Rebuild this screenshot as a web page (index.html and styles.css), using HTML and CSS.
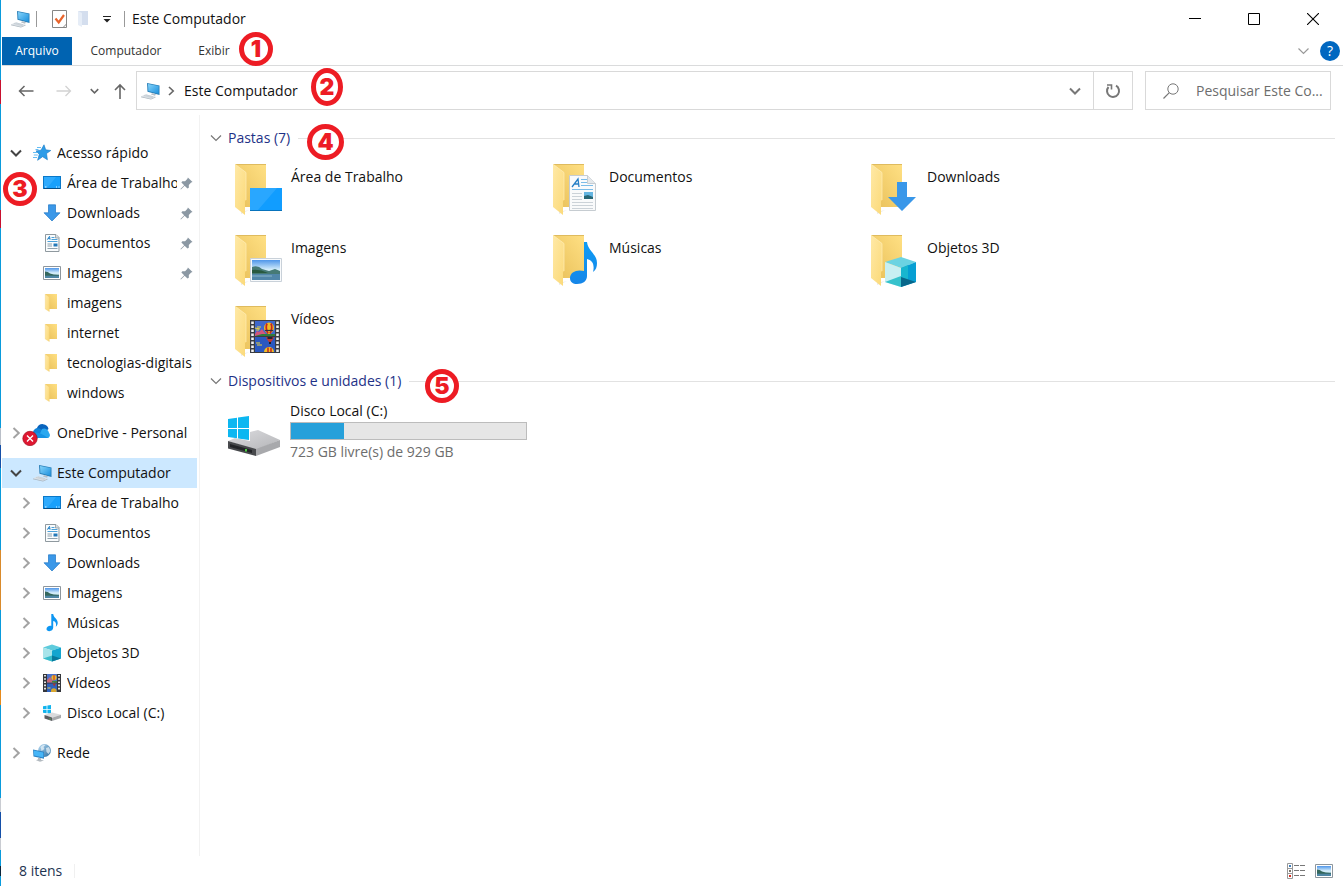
FILE: index.html
```html
<!DOCTYPE html>
<html lang="pt">
<head>
<meta charset="utf-8">
<title>Este Computador</title>
<link rel="stylesheet" href="styles.css">
</head>
<body>
<svg class="sprite" width="0" height="0" aria-hidden="true">
  <defs>
    <linearGradient id="gFront" x1="0" y1="0" x2="1" y2="1"><stop offset="0" stop-color="#ffe9a6"/><stop offset="1" stop-color="#fbd978"/></linearGradient>
    <linearGradient id="gBack" x1="0" y1="1" x2="1" y2="0"><stop offset="0" stop-color="#e8bf58"/><stop offset="1" stop-color="#ffe084"/></linearGradient>
    <linearGradient id="gSky" x1="0" y1="0" x2="0" y2="1"><stop offset="0" stop-color="#4f96ea"/><stop offset=".5" stop-color="#d8f0fb"/><stop offset="1" stop-color="#9cc9dc"/></linearGradient>
    <linearGradient id="gScreen" x1="0" y1="0" x2="1" y2="1"><stop offset="0" stop-color="#86d4fb"/><stop offset="1" stop-color="#1b90dd"/></linearGradient>
    <linearGradient id="gNote" x1="0" y1="0" x2="0" y2="1"><stop offset="0" stop-color="#0d9cf5"/><stop offset="1" stop-color="#1686e8"/></linearGradient>
    <linearGradient id="gDisk" x1="0" y1="0" x2="1" y2="1"><stop offset="0" stop-color="#dcdcdf"/><stop offset="1" stop-color="#b4b5b8"/></linearGradient>
    <linearGradient id="gGlobe" x1="0" y1="0" x2="1" y2="1"><stop offset="0" stop-color="#b9dcf4"/><stop offset="1" stop-color="#286c9f"/></linearGradient>
  </defs>
  <symbol id="pc" viewBox="0 0 20 18">
    <path d="M6 1l12.500 2.400v9.600L6.500 9.800z" fill="#287fb8"/><path d="M7 2l10.700 2.100v7.700L7.400 9z" fill="url(#gScreen)"/>
    <path d="M11 11.200l4 1-1 1.600-4-1.200z" fill="#b5bec6"/><path d="M4.500 12.300l10 2.500-4.500 2L0 14.400z" fill="#d9dfe4"/><path d="M0 14.400l10 2.400v.8L0 15.200zM10 16.800l4.500-2v.8L10 17.600z" fill="#aab4bd"/>
    <path d="M3 13.400l8.500 2.200M5 12.800l7 1.900" stroke="#b9c2ca" stroke-width=".5"/>
  </symbol>
  <symbol id="star" viewBox="0 0 18 18">
    <path d="M11 .8l1.700 5 5.100.7-4.300 3 .9 6.300-4.800-3.100-5 3.600 1.700-6L3 6.900l5-.7z" fill="#2c9ce8" stroke="#1679c4" stroke-width=".6"/>
    <path d="M4 3.500h4M2.500 5.500h3M0 8.500h4M.8 11h4M0 13.500h4" stroke="#55b4f0" stroke-width=".9"/>
  </symbol>
  <symbol id="desktop" viewBox="0 0 18 18">
    <rect x=".5" y="2.500" width="17" height="12" fill="#18a0fb" stroke="#0a78c8"/><path d="M1 3h12L5 13H1z" fill="#41b3ff" opacity=".6"/><path d="M1 14.500h16" stroke="#084f87"/><path d="M2 13h1.500M13 13h1M15.500 13h1" stroke="#fff" stroke-width=".9"/>
  </symbol>
  <symbol id="down" viewBox="0 0 18 18"><path d="M5.500.800h7v8h4.500L9 17 1 8.800h4.500z" fill="#3b98e8" stroke="#1e77c6" stroke-width=".7"/></symbol>
  <symbol id="doc" viewBox="0 0 18 18">
    <path d="M2.500.500h10.500l3 3v14H2.500z" fill="#fafcfd" stroke="#8f999f"/><path d="M12.500.500v3.500h3.500" fill="#d7dde0" stroke="#8f999f" stroke-width=".8"/>
    <path d="M4.300 5.700L6.500 2.300l.6 3.400M5 4.600h2" fill="none" stroke="#2684c9"/><path d="M8.500 3.500h3M8.500 5.500h6M4.500 7.500h10" stroke="#3796d5" stroke-width=".9"/><path d="M4.500 10h4.500M4.500 12h4.500M4.500 14.500h10" stroke="#8296a4" stroke-width=".9"/><path d="M10.500 9.500h4v3h-4z" fill="#2479b8"/>
  </symbol>
  <symbol id="picture" viewBox="0 0 18 18">
    <path d="M.5 2.500h17v13H.5z" fill="#fff" stroke="#8d969d"/><path d="M2 4h14v10H2z" fill="url(#gSky)"/><path d="M2 7.500q3 0 5 2 4 1.500 9 1.300v1.200H2z" fill="#34675c"/><path d="M2 11.700h14V14H2z" fill="#4e86a4"/>
  </symbol>
  <symbol id="folder" viewBox="0 0 18 18"><path d="M2.500 0h11.500v15h-8z" fill="url(#gBack)"/><path d="M2.300 0l4 3V17.500l-4-2.500z" fill="url(#gFront)" stroke="#efca6c" stroke-width=".4"/></symbol>
  <symbol id="note" viewBox="0 0 18 18"><path d="M8.300 0h1.900c.4 3.700 4.500 5 4.500 8.800 0 1.800-.7 3-1.900 4 .9-3.500-.5-5.300-2.600-5.700v6.500c0 2.200-1.800 3.600-3.900 3.600-1.600 0-2.800-.9-2.800-2.200 0-2.100 2.500-3.600 4.800-3z" fill="#0d96f2"/></symbol>
  <symbol id="cube" viewBox="0 0 18 18"><path d="M0 3.500L9 .500l9 3-9 3z" fill="#5ecbdc"/><path d="M0 3.500l9 3v11l-9-3z" fill="#a7e4ea"/><path d="M9 6.500l9-3v11l-9 3z" fill="#13a5cf"/><path d="M0 14.500l9-3v6z" fill="#37bccb"/><path d="M9 11.500l9 3-9 3z" fill="#08799c"/></symbol>
  <symbol id="film" viewBox="0 0 18 18">
    <path d="M0 0h18v18H0z" fill="#34363b"/><path d="M4 0h10v8.500H4z" fill="#4d72c8"/><path d="M4 9.500h10V18H4z" fill="#3062bd"/><path d="M4 6l3-3 2 3 2 1v1.500H4z" fill="#c86876"/><circle cx="11" cy="3.600" r="2.600" fill="#ebb82c"/><path d="M10.500 1h1v5h-1z" fill="#c73125"/><path d="M9 7h5v1.500H9z" fill="#3f863b"/><path d="M8 17a2.800 2.800 0 015.600 0v1H8z" fill="#d8a62f"/><path d="M9.500 9.500h3.500l-1.700 3z" fill="#a93831"/><path d="M4.500 14h3" stroke="#e8cf4a"/>
    <path d="M2 1v16M16 1v16" stroke="#f5f5f5" stroke-width="1.800" stroke-dasharray="1.600 1.600"/>
  </symbol>
  <symbol id="drive" viewBox="0 0 18 18"><path d="M0 2.200l3.600-.5V5H0zM4.400 1.600L8 1v4H4.400zM0 5.800h3.600v3.400L0 8.700zM4.400 5.800H8v4l-3.600-.5z" fill="#10b4ee"/><path d="M1.500 11l7.500-2.500 9 2.200-9 3z" fill="#d9dadc"/><path d="M1.500 11L9 13.600V17l-7.500-2.500z" fill="#595c60"/><path d="M9 13.700l9-3V14l-9 3z" fill="#a7a9ac"/><path d="M7 14.500v1" stroke="#5be045"/></symbol>
  <symbol id="network" viewBox="0 0 18 18"><circle cx="11.500" cy="6.500" r="6.400" fill="url(#gGlobe)"/><path d="M7.500 3q3-3 5-2l-2 2 1 2-3 2zM13 4l3-1 1.500 4-2 3-2-2z" fill="#eff7fb" opacity=".7"/><path d="M0 5.500l11 2.200v7L.5 12.500z" fill="#2b82c4"/><path d="M.8 6.500l9.500 1.900v5l-9.100-1.900z" fill="#46b5f7"/><path d="M5 13.700l3 .6v1.500l3 .8-4 1.200-4-1.500 2-1z" fill="#b3bac0"/></symbol>
  <symbol id="cloud" viewBox="0 0 30 26">
    <path d="M15 8a6 6 0 0111.500 1l-5 4-8-3z" fill="#0a64bd"/><path d="M11 14.500a5 5 0 016-6.200l7 4.200-9 6z" fill="#1283d8"/><path d="M20 9a5 5 0 017 3.800 3.700 3.700 0 01-.7 5.200H16z" fill="#2aa8ef"/><path d="M11 13q5-2 15 5h-14z" fill="#1593e4"/>
    <circle cx="8" cy="18.500" r="7.200" fill="#df1731" stroke="#a3101f" stroke-width=".7"/><path d="M5 15.500l6 6M11 15.500l-6 6" stroke="#fff" stroke-width="1.400"/>
  </symbol>
  <symbol id="pin" viewBox="0 0 14 14"><path d="M8.500.500l5 5-1.500.5-2.500 2.500v3l-1.500 1-3-3L1 13.500.500 13 4.500 9l-3-3 1-1.500h3L8 2z" fill="#8b98a3"/></symbol>
  <symbol id="right" viewBox="0 0 10 12"><path d="M2.500 1L7.800 6l-5.300 5" fill="none" stroke="currentColor" stroke-width="2"/></symbol>
  <symbol id="chev" viewBox="0 0 12 8"><path d="M1 1.500l5 5 5-5" fill="none" stroke="currentColor" stroke-width="var(--sw, 2)"/></symbol>
  <symbol id="big-folder" viewBox="0 0 56 56">
    <path d="M14 50l8-2-8 4z" fill="#e8e8e8"/><path d="M8 2h31v43H18z" fill="url(#gBack)"/><path d="M8 2h31v1H9z" fill="#dfbb5e"/><path d="M8 2l11 8.500V38l-1 1v14L8 45z" fill="url(#gFront)"/><path d="M8.500 2.500L19 10.500V38" fill="none" stroke="#ffeeb9" stroke-width=".7"/>
  </symbol>
</svg>

<div class="window">
  <header class="titlebar">
    <svg class="ico pc" aria-hidden="true"><use href="#pc"/></svg>
    <span class="sep"></span>
    <button class="quick" aria-label="Propriedades"><svg width="16" height="18" viewBox="0 0 16 18"><path d="M.5.500h14v17H.5z" fill="#fff" stroke="#868686"/><path d="M11 17.500l3.500-3.500" stroke="#868686"/><path d="M3.500 8.500l3.200 4L12 5" fill="none" stroke="#e8642b" stroke-width="2.200"/></svg></button>
    <button class="quick" aria-label="Nova pasta"><svg width="16" height="18" viewBox="0 0 16 18"><path d="M2 1h10v14H6z" fill="#d4deee"/><path d="M2 1l4 2v14l-4-2z" fill="#e6edf7"/></svg></button>
    <button class="quick more" aria-label="Personalizar"><svg width="8" height="8" viewBox="0 0 8 8"><path d="M0 1.500h8" stroke="#222"/><path d="M.5 4h7L4 7.500z" fill="#222"/></svg></button>
    <span class="sep"></span>
    <h1>Este Computador</h1>
    <div class="controls">
      <button aria-label="Minimizar"><svg width="12" height="12"><path d="M0 5.500h12" stroke="#000"/></svg></button>
      <button aria-label="Maximizar"><svg width="12" height="12"><path d="M.5.500h11v11H.5z" fill="none" stroke="#000"/></svg></button>
      <button aria-label="Fechar"><svg width="12" height="12"><path d="M0 0l12 12M12 0L0 12" stroke="#000" stroke-width="1.100"/></svg></button>
    </div>
  </header>

  <nav class="ribbon" aria-label="Faixa de opções">
    <button class="file">Arquivo</button>
    <button class="tab-a">Computador</button>
    <button class="tab-b">Exibir</button>
    <button class="expand thin" aria-label="Expandir"><svg width="13" height="8"><use href="#chev"/></svg></button>
    <button class="help" aria-label="Ajuda"><span>?</span></button>
  </nav>

  <div class="toolbar">
    <div class="history">
      <button class="back" aria-label="Voltar"><svg width="16" height="12" viewBox="0 0 16 12"><path d="M15.500 6H1.500M6.500 1l-5 5 5 5" fill="none" stroke="#666" stroke-width="1.500"/></svg></button>
      <button class="forward" aria-label="Avançar"><svg width="16" height="12" viewBox="0 0 16 12"><path d="M.5 6h14M9.500 1l5 5-5 5" fill="none" stroke="#d2d2d2" stroke-width="1.300"/></svg></button>
      <button class="recent" aria-label="Recentes"><svg width="9" height="6"><use href="#chev"/></svg></button>
      <button class="up" aria-label="Acima"><svg width="12" height="16" viewBox="0 0 12 16"><path d="M6 16V2M1 7l5-5 5 5" fill="none" stroke="#666" stroke-width="1.600"/></svg></button>
    </div>
    <div class="address">
      <svg class="ico pc" aria-hidden="true"><use href="#pc"/></svg>
      <svg class="crumb" width="8" height="10" aria-hidden="true"><use href="#right"/></svg>
      <button class="place">Este Computador</button>
      <button class="drop" aria-label="Locais anteriores"><svg width="12" height="8"><use href="#chev"/></svg></button>
      <button class="refresh" aria-label="Atualizar"><svg width="16" height="16" viewBox="0 0 16 16"><path d="M11 2.700A6 6 0 113.500 4" fill="none" stroke="#777" stroke-width="2"/><path d="M2 2h4.500v4.500" fill="none" stroke="#777" stroke-width="1.600"/></svg></button>
    </div>
    <label class="search">
      <svg width="16" height="16" viewBox="0 0 16 16" aria-hidden="true"><circle cx="10" cy="6" r="5.200" fill="none" stroke="#777"/><path d="M6.300 9.700L.5 15.500" stroke="#777" stroke-width="1.200"/></svg>
      <input type="text" placeholder="Pesquisar Este Co..." aria-label="Pesquisar Este Computador">
    </label>
  </div>

  <div class="body">
    <nav class="tree" aria-label="Painel de navegação">
      <ul>
        <li class="open"><button class="tog" aria-label="Recolher"><svg width="12" height="8"><use href="#chev"/></svg></button><svg class="ico"><use href="#star"/></svg><a href="#">Acesso rápido</a></li>
        <li class="child"><svg class="ico"><use href="#desktop"/></svg><a href="#">Área de Trabalho</a><svg class="pin"><use href="#pin"/></svg></li>
        <li class="child"><svg class="ico"><use href="#down"/></svg><a href="#">Downloads</a><svg class="pin"><use href="#pin"/></svg></li>
        <li class="child"><svg class="ico"><use href="#doc"/></svg><a href="#">Documentos</a><svg class="pin"><use href="#pin"/></svg></li>
        <li class="child"><svg class="ico"><use href="#picture"/></svg><a href="#">Imagens</a><svg class="pin"><use href="#pin"/></svg></li>
        <li class="child"><svg class="ico"><use href="#folder"/></svg><a href="#">imagens</a></li>
        <li class="child"><svg class="ico"><use href="#folder"/></svg><a href="#">internet</a></li>
        <li class="child"><svg class="ico"><use href="#folder"/></svg><a href="#">tecnologias-digitais</a></li>
        <li class="child"><svg class="ico"><use href="#folder"/></svg><a href="#">windows</a></li>
      </ul>
      <ul>
        <li class="onedrive"><button class="tog" aria-label="Expandir"><svg width="10" height="12"><use href="#right"/></svg></button><svg class="ico cloud"><use href="#cloud"/></svg><a href="#">OneDrive - Personal</a></li>
      </ul>
      <ul>
        <li class="open selected"><button class="tog" aria-label="Recolher"><svg width="12" height="8"><use href="#chev"/></svg></button><svg class="ico pc"><use href="#pc"/></svg><a href="#">Este Computador</a></li>
        <li class="sub"><button class="tog" aria-label="Expandir"><svg width="10" height="12"><use href="#right"/></svg></button><svg class="ico"><use href="#desktop"/></svg><a href="#">Área de Trabalho</a></li>
        <li class="sub"><button class="tog" aria-label="Expandir"><svg width="10" height="12"><use href="#right"/></svg></button><svg class="ico"><use href="#doc"/></svg><a href="#">Documentos</a></li>
        <li class="sub"><button class="tog" aria-label="Expandir"><svg width="10" height="12"><use href="#right"/></svg></button><svg class="ico"><use href="#down"/></svg><a href="#">Downloads</a></li>
        <li class="sub"><button class="tog" aria-label="Expandir"><svg width="10" height="12"><use href="#right"/></svg></button><svg class="ico"><use href="#picture"/></svg><a href="#">Imagens</a></li>
        <li class="sub"><button class="tog" aria-label="Expandir"><svg width="10" height="12"><use href="#right"/></svg></button><svg class="ico"><use href="#note"/></svg><a href="#">Músicas</a></li>
        <li class="sub"><button class="tog" aria-label="Expandir"><svg width="10" height="12"><use href="#right"/></svg></button><svg class="ico"><use href="#cube"/></svg><a href="#">Objetos 3D</a></li>
        <li class="sub"><button class="tog" aria-label="Expandir"><svg width="10" height="12"><use href="#right"/></svg></button><svg class="ico"><use href="#film"/></svg><a href="#">Vídeos</a></li>
        <li class="sub"><button class="tog" aria-label="Expandir"><svg width="10" height="12"><use href="#right"/></svg></button><svg class="ico"><use href="#drive"/></svg><a href="#">Disco Local (C:)</a></li>
      </ul>
      <ul>
        <li><button class="tog" aria-label="Expandir"><svg width="10" height="12"><use href="#right"/></svg></button><svg class="ico"><use href="#network"/></svg><a href="#">Rede</a></li>
      </ul>
    </nav>

    <main class="content">
      <section>
        <h2 class="thin"><button><svg width="12" height="8"><use href="#chev"/></svg>Pastas (7)</button></h2>
        <div class="tiles">
          <a class="tile" href="#"><svg viewBox="0 0 56 56"><use href="#big-folder"/><path d="M23 26h32v23H23z" fill="#119dff"/><path d="M23 26h27L31 48h-8z" fill="#42b1ff" opacity=".5"/><path d="M23 48.500h32" stroke="#0873bc"/></svg><span>Área de Trabalho</span></a>
          <a class="tile" href="#"><svg viewBox="0 0 56 56"><use href="#big-folder"/><path d="M24.500 13.500h18l8 8v27h-26z" fill="#f9fafb" stroke="#c6ccd1"/><path d="M42.500 13.500v8h8" fill="#e4e8eb" stroke="#c6ccd1"/><path d="M27 25l6-8 1 8M29.500 22h4.500" fill="none" stroke="#267fc6" stroke-width="1.300"/><path d="M36 17.500h6M36 20.500h6M36 23.500h12M27 27.500h21" stroke="#7bbce8"/><path d="M27 31.500h10M27 34.500h10M27 37.500h10M27 40.500h21M27 43.500h21M27 46.500h21" stroke="#cbd2d8"/><path d="M39 30h9v7h-9z" fill="#64b5e1"/><path d="M39 34l4-1 5 2v2h-9z" fill="#276776"/></svg><span>Documentos</span></a>
          <a class="tile" href="#"><svg viewBox="0 0 56 56"><use href="#big-folder"/><path d="M34 20h10v15h9L39 49 25 35h9z" fill="#3997e9"/></svg><span>Downloads</span></a>
          <a class="tile" href="#"><svg viewBox="0 0 56 56"><use href="#big-folder"/><path d="M23.500 25.500h31v23h-31z" fill="#f8fafc" stroke="#c9d1d9"/><path d="M25 27h28v20H25z" fill="url(#gSky)"/><path d="M25 34q6-2 10 2l7 2 6-2 5 2v3H25z" fill="#467a76"/><path d="M25 37q8-1 16 3H25z" fill="#28593f"/><path d="M25 41h28v6H25z" fill="#5186a9"/><path d="M25 43h20" stroke="#8bb5cb"/></svg><span>Imagens</span></a>
          <a class="tile" href="#"><svg viewBox="0 0 56 56"><use href="#big-folder"/><path d="M39 9h3c1 9 10 12 10 21 0 4-1 7-4 9 2-8-1-12-6-13v17c0 5-4 8-10 8-4 0-7-2-7-6 0-6 7-9 14-7z" fill="url(#gNote)"/></svg><span>Músicas</span></a>
          <a class="tile" href="#"><svg viewBox="0 0 56 56"><use href="#big-folder"/><path d="M22 29l16-5 15 5-15 6z" fill="#6bd3e2"/><path d="M22 29l16 6v19l-16-5z" fill="#c8eff2"/><path d="M38 35l15-6v20l-15 5z" fill="#069fd3"/><path d="M38 35l7-3v16l-7-3z" fill="#18b6cf"/><path d="M22 49l16-6v11z" fill="#36c2cc"/><path d="M38 44l15 5-15 5z" fill="#08678b"/></svg><span>Objetos 3D</span></a>
          <a class="tile" href="#"><svg viewBox="0 0 56 56"><use href="#big-folder"/>
            <path d="M23 16h30v33H23z" fill="#3a3c42"/><path d="M28 17h20v15H28z" fill="#3f68cc"/><path d="M28 33h20v15H28z" fill="#2a58c0"/>
            <path d="M28 30l2-3 2 1 3-3 2 3 2 2v2h-11z" fill="#d2557c"/><path d="M35 30h13v2H28z" fill="#2f7d3c"/><path d="M28 24l5 1M30 23h4M29 26h3" stroke="#ecd23d" stroke-width="1.200"/>
            <path d="M37 24a5 5.500 0 0110 0q0 3-4 6h-2q-4-3-4-6z" fill="#f0bd24"/><path d="M40 19.500q-2 4 1 10M44 19.500q2 4-1 10" fill="none" stroke="#c32424" stroke-width="1.800"/><path d="M38 26.500h8" stroke="#35303c" stroke-width="1.200"/>
            <path d="M39 33h8q-1 3-3 5h-2q-2-2-3-5z" fill="#c13a35"/><path d="M40.500 34h5" stroke="#28232e" stroke-width="2"/><path d="M43 38v2" stroke="#241c20" stroke-width="2"/>
            <path d="M37 48a5 5 0 0110 0z" fill="#f0bd24"/><path d="M41 43.500v4.500M44 44v4" stroke="#c32424" stroke-width="1.500"/><path d="M29 39h4M30 41h5" stroke="#ecd23d" stroke-width="1.200"/>
            <path d="M25.500 17.500v31M50.500 17.500v31" stroke="#f0f0f0" stroke-width="2.600" stroke-dasharray="2.400 1.600"/></svg><span>Vídeos</span></a>
        </div>
      </section>
      <section>
        <h2 class="thin"><button><svg width="12" height="8"><use href="#chev"/></svg>Dispositivos e unidades (1)</button></h2>
        <div class="tiles">
          <a class="tile drive" href="#">
            <svg viewBox="0 0 56 56"><path d="M1 15l9-1.300V24H1zM11 13.500L22 12v12H11zM1 25h9v9.300L1 33zM11 25h11v11l-11-1.500z" fill="#0cb7f1"/><path d="M1 37l7-3 15 3V28l8-2 22 10-24 10z" fill="url(#gDisk)"/><path d="M1 37l28 8v7L1 44.500z" fill="#47494c"/><path d="M3 40l22 6v3L3 43z" fill="#222427"/><path d="M29 45l24-9v7L29 52z" fill="#a8a9ac"/><path d="M19 45v2.500" stroke="#52df45" stroke-width="1.800"/></svg>
            <span class="info"><span>Disco Local (C:)</span><span class="usage" role="progressbar" aria-label="Espaço usado" aria-valuenow="22" aria-valuemin="0" aria-valuemax="100"><i style="width:22.4%"></i></span><span class="free">723 GB livre(s) de 929 GB</span></span>
          </a>
        </div>
      </section>
    </main>
  </div>

  <footer class="status">
    <span class="count">8 itens</span>
    <button class="details" aria-label="Detalhes"><svg width="18" height="16" viewBox="0 0 18 16"><path d="M.5.500h5v15h-5zM.5 5.500h5M.5 10.500h5" fill="#fff" stroke="#999"/><path d="M2 2h2v2H2z" fill="#3c7dbb"/><path d="M2 7h2v2H2z" fill="#7c746b"/><path d="M2 12h2v2H2z" fill="#d62d1f"/><path d="M7 2.500h5M13 2.500h5M7 7.500h5M13 7.500h5M7 12.500h5M13 12.500h5" stroke="#777"/></svg></button>
    <button aria-label="Ícones grandes"><svg class="ico"><use href="#picture"/></svg></button>
  </footer>

  <span class="mark m1">1</span>
  <span class="mark m2">2</span>
  <span class="mark m3">3</span>
  <span class="mark m4">4</span>
  <span class="mark m5">5</span>
</div>
</body>
</html>
```

FILE: styles.css
```css
* { box-sizing: border-box; }
body {
  margin: 0;
  padding-bottom: 6px;
  background: #fff;
  color: #111;
  font: 14px/20px "Open Sans", "Noto Sans", sans-serif;
}
button, input { font: inherit; color: inherit; }
button {
  display: flex;
  align-items: center;
  justify-content: center;
  margin: 0;
  padding: 0;
  border: 0;
  background: none;
}
a { color: inherit; text-decoration: none; }
svg { display: block; flex: none; }
h1, h2 { margin: 0; font: inherit; }
ul { margin: 0; padding: 0; list-style: none; }
.thin { --sw: 1.2; }
.ico { width: 18px; height: 18px; }
.pc { width: 20px; }

.window {
  position: relative;
  display: flex;
  flex-direction: column;
  min-height: calc(100vh - 6px);
  padding-left: 2px;
  background: linear-gradient(#0a9bdc 0 80px, #c8102e 80px 104px, #0a9bdc 104px 210px, #c8102e 210px 228px, #0a9bdc 228px 428px, #b9bfc8 428px 445px, #144fa8 445px 468px, #0a9bdc 468px 550px, #d98a2b 550px 610px, #0a9bdc 610px 690px, #e68a1c 690px 705px, #0a9bdc 705px 798px, #c9ccd2 798px 812px, #144fa8 812px 838px, #c9ccd2 838px 850px, #0a9bdc 850px 866px, #0b2438 866px 876px, #0a9bdc 876px) 0 0 / 1px 100% no-repeat;
}

.titlebar { display: flex; align-items: center; height: 37px; padding-left: 9px; }
.titlebar .pc { margin-right: 5px; }
.sep { width: 1px; height: 16px; background: #999; }
.quick { width: 16px; margin-left: 8px; }
.quick:first-of-type { margin-left: 15px; }
.quick.more { margin-left: 7px; margin-right: 9px; }
.titlebar h1 { margin-left: 7px; }
.controls { display: flex; align-self: stretch; margin-left: auto; padding-right: 1px; }
.controls button { width: 59px; }

.ribbon { display: flex; height: 29px; padding-right: 3px; border-bottom: 1px solid #dadbdc; color: #333; font-size: 12px; }
.file { width: 70px; background: #0063b1; color: #fff; }
.tab-a { width: 108px; }
.tab-b { width: 68px; }
.expand { margin-left: auto; margin-right: 10px; color: #999; }
.help span { width: 20px; border-radius: 50%; background: #0067c0; color: #fff; font-size: 14px; line-height: 20px; }

.toolbar { display: flex; align-items: center; height: 49px; padding-right: 12px; }
.history { display: flex; width: 134px; padding-left: 16px; color: #666; }
.forward { margin-left: 22px; }
.recent { margin-left: 18px; }
.up { margin-left: 15px; }
.address { display: flex; flex: 1; align-items: center; height: 39px; padding-left: 4px; border: 1px solid #d9d9d9; }
.crumb { margin: 0 9px 0 6px; color: #666; }
.drop { width: 36px; height: 37px; margin-left: auto; color: #777; }
.refresh { width: 39px; height: 37px; border-left: 1px solid #d9d9d9; }
.search { display: flex; align-items: center; width: 186px; height: 39px; margin-left: 12px; padding-left: 17px; border: 1px solid #d9d9d9; }
.search input { flex: 1; min-width: 0; margin-left: 17px; padding: 0; border: 0; outline: 0; background: none; }
.search input::placeholder { color: #6d6d6d; opacity: 1; }

.body { display: flex; flex: 1; }
.tree { display: flex; flex-direction: column; gap: 10px; width: 198px; padding: 23px 2px 23px 0; border-right: 1px solid #f2f2f2; }
.tree li { display: flex; align-items: center; height: 30px; }
.tree a { flex: 1; min-width: 0; margin-left: 6px; overflow: hidden; white-space: nowrap; }
.tog { width: 28px; height: 30px; margin-right: 3px; color: #a3a3a3; }
.open .tog { color: #444; }
.tree .child { padding-left: 41px; }
.tree .sub { padding-left: 10px; }
.tree .selected { background: #cce8ff; }
.tree .pc { margin-right: -2px; }
.tree .cloud { width: 30px; height: 26px; margin-left: -11px; margin-right: -1px; }
.pin { width: 13px; height: 13px; margin: 0 4px 0 3px; }

.content { flex: 1; min-width: 0; padding: 8px 8px 0 10px; }
.content h2 { display: flex; align-items: center; height: 30px; color: #1e3287; }
.content h2::after { content: ""; flex: 1; height: 1px; margin-left: 8px; background: #e2e2e2; }
.content h2 svg { margin-right: 6px; color: #777; }
.tiles { display: grid; grid-template-columns: repeat(auto-fill, 318px); padding-left: 17px; }
.tile { display: flex; gap: 8px; height: 71px; padding-top: 9px; }
.tile > svg { width: 56px; height: 56px; }
.tile > span { padding-top: 5px; }
.tile.drive { gap: 7px; padding-top: 5px; }
.tile.drive > svg { margin-top: 3px; }
.tile .info { display: flex; flex-direction: column; padding: 0; }
.usage { width: 237px; height: 18px; margin: 1px 0 2px; border: 1px solid #bcbcbc; background: #e6e6e6; }
.usage i { display: block; height: 100%; background: #26a0da; }
.free { color: #6d6d6d; }

.status { display: flex; align-items: center; height: 30px; padding: 0 10px 0 17px; color: #1d3350; }
.count { margin-right: auto; padding-right: 12px; border-right: 1px solid #f0f0f0; line-height: 14px; }
.details { margin-right: 10px; }

.mark {
  position: absolute;
  display: flex;
  align-items: center;
  justify-content: center;
  width: 34px;
  height: 34px;
  border: 5px solid #ed1c24;
  border-radius: 50%;
  background: #fff;
  color: #ed1c24;
  font: 900 23px/23px Inter, "DejaVu Sans", sans-serif;
}
.m1 { left: 239px; top: 32px; }
.m2 { left: 311px; top: 68px; width: 32px; height: 38px; }
.m3 { left: 3px; top: 172px; }
.m4 { left: 307px; top: 124px; width: 37px; height: 36px; }
.m5 { left: 425px; top: 369px; }
```
